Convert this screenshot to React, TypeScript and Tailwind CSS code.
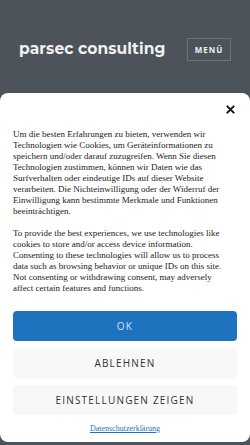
import React from "react";

const de = [
  "Um die besten Erfahrungen zu bieten, verwenden wir",
  "Technologien wie Cookies, um Geräteinformationen zu",
  "speichern und/oder darauf zuzugreifen. Wenn Sie diesen",
  "Technologien zustimmen, können wir Daten wie das",
  "Surfverhalten oder eindeutige IDs auf dieser Website",
  "verarbeiten. Die Nichteinwilligung oder der Widerruf der",
  "Einwilligung kann bestimmte Merkmale und Funktionen",
  "beeinträchtigen.",
];
const en = [
  "To provide the best experiences, we use technologies like",
  "cookies to store and/or access device information.",
  "Consenting to these technologies will allow us to process",
  "data such as browsing behavior or unique IDs on this site.",
  "Not consenting or withdrawing consent, may adversely",
  "affect certain features and functions.",
];

export default function App() {
  return (
    <div className="w-[250px] h-[445px] bg-[#4c535b] flex flex-col overflow-hidden">
      <header className="h-[93px] shrink-0 flex items-start justify-between pl-[19px] pr-[19px] pt-[38px]">
        <div className="text-[15.5px] font-bold text-[#f1f1f1] leading-[22px] tracking-[0.1px]" style={{ fontFamily: "Montserrat, 'Open Sans', sans-serif" }}>
          parsec consulting
        </div>
        <div className="border border-[#6c737a] w-[44px] h-[23px] flex items-center justify-center text-[8px] font-bold tracking-[1px] text-[#f1f1f1]" style={{ fontFamily: "'Open Sans', sans-serif" }}>
          MENÜ
        </div>
      </header>
      <div className="bg-white rounded-[8px] h-[349px] shrink-0 flex flex-col px-[13px] pt-[12px]">
        <div className="flex justify-end pr-[2px]">
          <svg width="9" height="9" viewBox="0 0 10 10">
            <path d="M1.5 1.5 L8.5 8.5 M8.5 1.5 L1.5 8.5" stroke="#111" strokeWidth="2.2" strokeLinecap="round" />
          </svg>
        </div>
        <div className="mt-[15px] text-[9px] leading-[11px] text-[#222]" style={{ fontFamily: "'Liberation Serif', serif" }}>
          <div>
            {de.map((l) => (
              <div key={l} className="whitespace-nowrap">{l}</div>
            ))}
          </div>
          <div className="mt-[11px]">
            {en.map((l) => (
              <div key={l} className="whitespace-nowrap">{l}</div>
            ))}
          </div>
        </div>
        <div className="mt-[17px] flex flex-col gap-[7px]" style={{ fontFamily: "'Open Sans', sans-serif" }}>
          <div className="h-[30px] rounded-[4px] bg-[#1e73be] flex items-center justify-center text-[10px] tracking-[1.2px] text-[#cfe3f5]">OK</div>
          <div className="h-[30px] rounded-[4px] bg-[#f8f8f8] flex items-center justify-center text-[10px] tracking-[1.2px] text-[#333]">ABLEHNEN</div>
          <div className="h-[30px] rounded-[4px] bg-[#f8f8f8] flex items-center justify-center text-[10px] tracking-[1.2px] text-[#333]">EINSTELLUNGEN ZEIGEN</div>
        </div>
        <div className="mt-[4px] text-center leading-[12px]">
          <span className="text-[8px] underline text-[#1e73be]" style={{ fontFamily: "'Liberation Serif', serif" }}>Datenschutzerklärung</span>
        </div>
      </div>
    </div>
  );
}
